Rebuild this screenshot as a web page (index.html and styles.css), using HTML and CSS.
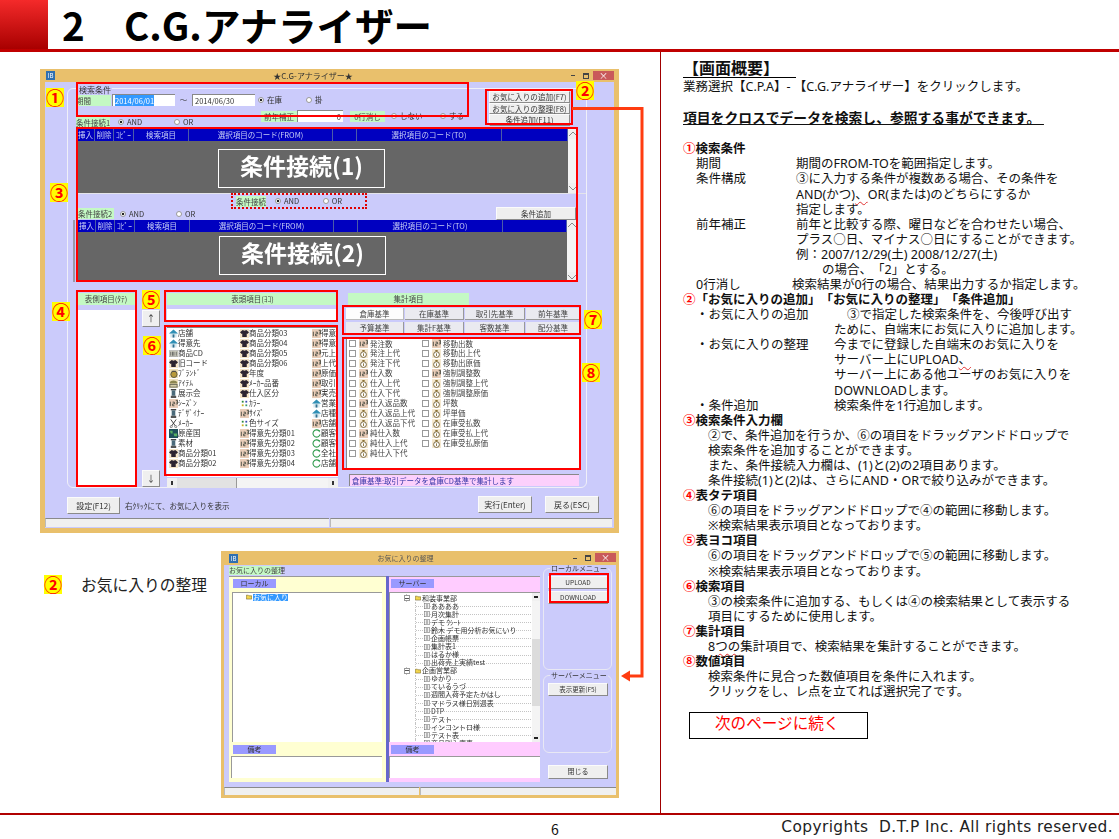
FILE: index.html
```html
<!DOCTYPE html>
<html lang="ja">

<head>
    <meta charset="UTF-8">
    <title>C.G.アナライザー</title>
    <link rel="stylesheet" href="styles.css">
</head>

<body>
    <svg class="defs" width="0" height="0">
        <symbol id="i-house" viewBox="0 0 10 10"><path d="M0 5 5 .5 10 5 8.5 5V9.5H1.5V5Z" fill="#d8e8ee"/><path d="M0 5 5 .5 10 5Z" fill="#2f8fb5"/><rect x="4" y="6" width="2" height="3.5" fill="#2f6f8f"/></symbol>
        <symbol id="i-shirt" viewBox="0 0 10 10"><rect width="10" height="10" fill="#f6e6c8"/><path d="M3 1 5 2 7 1 10 3.5 8.2 5.5 7.5 5V9H2.5V5L1.8 5.5 0 3.5Z" fill="#2c2430"/></symbol>
        <symbol id="i-123" viewBox="0 0 10 10"><rect width="10" height="10" fill="#e9cdb8"/><path d="M1.5 3V8M4 3.5H6V5.5H4V7.5H6M7.5 1.5H9.5V3.5H8M9.5 3.5V5.5H7.5" fill="none" stroke="#3a4038" stroke-width=".9"/></symbol>
        <symbol id="i-bag" viewBox="0 0 10 10"><rect width="10" height="10" fill="#f5e8cf"/><circle cx="5" cy="6.2" r="3.2" fill="#fff" stroke="#6b5a32"/><path d="M3.5 1H6.5L5.8 3H4.2Z" fill="#8a7236"/><path d="M5 4.8V7.8" stroke="#8a7236"/></symbol>
        <symbol id="i-lantern" viewBox="0 0 10 10"><rect x="2" y="0" width="6" height="1.5" fill="#444"/><rect x="3" y="1.5" width="4" height="6" fill="#4a6a7a"/><rect x="2" y="7.5" width="6" height="2.5" fill="#555"/></symbol>
        <symbol id="i-bar" viewBox="0 0 10 10"><rect y="2" width="10" height="6.5" fill="#d8d8c8" stroke="#888" stroke-width=".6"/><path d="M2 3V7.5M4 3V7.5M5.5 3V7.5M8 3V7.5" stroke="#555"/></symbol>
        <symbol id="i-brand" viewBox="0 0 10 10"><rect width="10" height="10" fill="#f3e4b8"/><circle cx="5.5" cy="6" r="3.5" fill="#b89a3a" stroke="#554"/><path d="M3 2.5H8" stroke="#444"/></symbol>
        <symbol id="i-hat" viewBox="0 0 10 10"><rect width="10" height="10" fill="#f0e2c0"/><path d="M1 4C1 1 9 1 9 4V5H1Z" fill="#8c8650"/><rect x="1" y="6" width="8" height="3" fill="#d8cfa8" stroke="#665"/></symbol>
        <symbol id="i-dots" viewBox="0 0 10 10"><rect x="2" y="2" width="2" height="2" fill="#2c8a3a"/><rect x="6" y="2" width="2" height="2" fill="#3a4ab0"/><rect x="2" y="6" width="2" height="2" fill="#c8b020"/><rect x="6" y="6" width="2" height="2" fill="#3a9a70"/></symbol>
        <symbol id="i-cut" viewBox="0 0 10 10"><path d="M2 .5 8 9M8 .5 2 9" fill="none" stroke="#333"/><circle cx="2.5" cy="8.5" r="1.2" fill="#fff" stroke="#333" stroke-width=".6"/><circle cx="7.5" cy="8.5" r="1.2" fill="#fff" stroke="#333" stroke-width=".6"/></symbol>
        <symbol id="i-globe" viewBox="0 0 10 10"><rect width="10" height="10" fill="#20505a"/><path d="M1 2H4V5H2ZM5 5H9V8H6Z" fill="#58b060"/></symbol>
        <symbol id="i-ring" viewBox="0 0 10 10"><path d="M8 2.2A4 4 0 1 0 9 6" fill="none" stroke="#2e9a4c" stroke-width="1.2"/><path d="M6.8 .8 9.2 1.6 8 3.8Z" fill="#2e9a4c"/></symbol>
        <symbol id="i-doc" viewBox="0 0 10 10"><rect x="1" y=".5" width="8" height="9" fill="#fff" stroke="#777"/><path d="M3 3H7M3 5H7M3 7H7" stroke="#555"/></symbol>
        <symbol id="i-folder" viewBox="0 0 10 10"><path d="M.5 2H4L5 3H9.5V8.5H.5Z" fill="#f2d54e" stroke="#5a4a10" stroke-width=".8"/></symbol>
    </svg>

    <div class="slide">
        <!-- 見出し -->
        <header class="head">
            <div class="head-mark"></div>
            <h1 class="head-title"><span class="head-no">2</span>C.G.アナライザー</h1>
        </header>

        <main class="page">
            <!-- 左: 画面キャプチャ -->
            <section class="shots">
                <div class="shot">
                    <div class="win win-main">
                        <div class="win-bar">
                            <span class="win-ico">IB</span>
                            <span class="win-title">★C.G-アナライザー★</span>
                            <span class="win-ctl">
                                <span class="ctl-min"></span><span class="ctl-max"></span><span class="ctl-close">×</span>
                            </span>
                        </div>
                        <div class="win-body">
                            <div class="group">
                                <span class="legend">検索条件</span>

                                <div class="search-top">
                                    <div class="period">
                                        <div class="f-row">
                                            <span class="tag tag-period">期間</span>
                                            <span class="date date-first"><span class="sel">2014/06/01</span></span>
                                            <span class="tilde">～</span>
                                            <span class="date">2014/06/30</span>
                                            <span class="opt opt-stock"><i class="radio on"></i>在庫</span>
                                            <span class="opt"><i class="radio"></i>掛</span>
                                        </div>
                                        <div class="f-row row-hosei">
                                            <span class="tag tag-hosei">前年補正</span>
                                            <span class="num-in">0</span>
                                            <span class="tag tag-zero">0行消し</span>
                                            <span class="opt opt-shinai"><i class="radio"></i>しない</span>
                                            <span class="opt"><i class="radio on"></i>する</span>
                                        </div>
                                        <div class="f-row row-c1">
                                            <span class="tag tag-c1">条件接続1</span>
                                            <span class="opt opt-and"><i class="radio on"></i>AND</span>
                                            <span class="opt"><i class="radio"></i>OR</span>
                                        </div>
                                    </div>
                                    <div class="fav-btns">
                                        <span class="btn">お気に入りの追加(F7)</span>
                                        <span class="btn">お気に入りの整理(F8)</span>
                                        <span class="btn">条件追加(F11)</span>
                                    </div>
                                </div>

                                <div class="cond cond-a">
                                    <div class="cond-main">
                                        <div class="cond-head">
                                            <span>挿入</span><span>削除</span><span>ｺﾋﾟｰ</span><span>検索項目</span><span>選択項目のコード(FROM)</span><span></span><span>選択項目のコード(TO)</span><span></span>
                                        </div>
                                        <div class="cond-dark"><div class="cond-label">条件接続(1)</div></div>
                                    </div>
                                    <div class="vscroll"><i class="up"></i><i class="down"></i></div>
                                </div>

                                <div class="cond-mid">
                                    <div class="dotted">
                                        <span class="tag tag-dot">条件接続</span>
                                        <span class="opt opt-dot"><i class="radio on"></i>AND</span>
                                        <span class="opt"><i class="radio"></i>OR</span>
                                    </div>
                                    <div class="f-row row-c2">
                                        <span class="tag tag-c2">条件接続2</span>
                                        <span class="opt opt-and2"><i class="radio on"></i>AND</span>
                                        <span class="opt"><i class="radio"></i>OR</span>
                                        <span class="btn btn-add">条件追加</span>
                                    </div>
                                </div>

                                <div class="cond cond-b">
                                    <div class="cond-main">
                                        <div class="cond-head">
                                            <span>挿入</span><span>削除</span><span>ｺﾋﾟｰ</span><span>検索項目</span><span>選択項目のコード(FROM)</span><span></span><span>選択項目のコード(TO)</span><span></span>
                                        </div>
                                        <div class="cond-dark"><div class="cond-label">条件接続(2)</div></div>
                                    </div>
                                    <div class="vscroll"><i class="up"></i><i class="down"></i></div>
                                </div>

                                <div class="lower">
                                    <div class="col-tate">
                                        <div class="tag tag-head">表側項目(ﾀﾃ)</div>
                                        <div class="white tate-list"></div>
                                    </div>
                                    <div class="col-arrows">
                                        <span class="btn btn-arrow">↑</span>
                                        <span class="btn btn-arrow">↓</span>
                                    </div>
                                    <div class="col-yoko">
                                        <div class="tag tag-head">表頭項目(ﾖｺ)</div>
                                        <div class="white yoko-in"></div>
                                        <ul class="white items">
                                            <li><svg class="ico"><use href="#i-house"/></svg>店舗</li>
                                            <li><svg class="ico"><use href="#i-house"/></svg>得意先</li>
                                            <li><svg class="ico"><use href="#i-bar"/></svg>商品CD</li>
                                            <li><svg class="ico"><use href="#i-shirt"/></svg>旧コード</li>
                                            <li><svg class="ico"><use href="#i-brand"/></svg>ﾌﾞﾗﾝﾄﾞ</li>
                                            <li><svg class="ico"><use href="#i-hat"/></svg>ｱｲﾃﾑ</li>
                                            <li><svg class="ico"><use href="#i-lantern"/></svg>展示会</li>
                                            <li><svg class="ico"><use href="#i-123"/></svg>ｼｰｽﾞﾝ</li>
                                            <li><svg class="ico"><use href="#i-lantern"/></svg>ﾃﾞｻﾞｲﾅｰ</li>
                                            <li><svg class="ico"><use href="#i-cut"/></svg>ﾒｰｶｰ</li>
                                            <li><svg class="ico"><use href="#i-globe"/></svg>原産国</li>
                                            <li><svg class="ico"><use href="#i-lantern"/></svg>素材</li>
                                            <li><svg class="ico"><use href="#i-shirt"/></svg>商品分類01</li>
                                            <li><svg class="ico"><use href="#i-shirt"/></svg>商品分類02</li>

                                            <li><svg class="ico"><use href="#i-shirt"/></svg>商品分類03</li>
                                            <li><svg class="ico"><use href="#i-shirt"/></svg>商品分類04</li>
                                            <li><svg class="ico"><use href="#i-shirt"/></svg>商品分類05</li>
                                            <li><svg class="ico"><use href="#i-shirt"/></svg>商品分類06</li>
                                            <li><svg class="ico"><use href="#i-shirt"/></svg>年度</li>
                                            <li><svg class="ico"><use href="#i-shirt"/></svg>ﾒｰｶｰ品番</li>
                                            <li><svg class="ico"><use href="#i-shirt"/></svg>仕入区分</li>
                                            <li><svg class="ico"><use href="#i-dots"/></svg>ｶﾗｰ</li>
                                            <li><svg class="ico"><use href="#i-123"/></svg>ｻｲｽﾞ</li>
                                            <li><svg class="ico"><use href="#i-dots"/></svg>色サイズ</li>
                                            <li><svg class="ico"><use href="#i-123"/></svg>得意先分類01</li>
                                            <li><svg class="ico"><use href="#i-123"/></svg>得意先分類02</li>
                                            <li><svg class="ico"><use href="#i-123"/></svg>得意先分類03</li>
                                            <li><svg class="ico"><use href="#i-123"/></svg>得意先分類04</li>

                                            <li><svg class="ico"><use href="#i-123"/></svg>得意</li>
                                            <li><svg class="ico"><use href="#i-123"/></svg>得意</li>
                                            <li><svg class="ico"><use href="#i-123"/></svg>元上</li>
                                            <li><svg class="ico"><use href="#i-123"/></svg>上代</li>
                                            <li><svg class="ico"><use href="#i-123"/></svg>原価</li>
                                            <li><svg class="ico"><use href="#i-123"/></svg>取引</li>
                                            <li><svg class="ico"><use href="#i-123"/></svg>実売</li>
                                            <li><svg class="ico"><use href="#i-house"/></svg>営業</li>
                                            <li><svg class="ico"><use href="#i-house"/></svg>店種</li>
                                            <li><svg class="ico"><use href="#i-123"/></svg>店舗</li>
                                            <li><svg class="ico"><use href="#i-ring"/></svg>顧客</li>
                                            <li><svg class="ico"><use href="#i-ring"/></svg>顧客</li>
                                            <li><svg class="ico"><use href="#i-ring"/></svg>全社</li>
                                            <li><svg class="ico"><use href="#i-ring"/></svg>店舗</li>
                                        </ul>
                                        <div class="hscroll"><i class="left"></i><i class="thumb"></i><i class="right"></i></div>
                                    </div>
                                    <div class="col-shukei">
                                        <div class="tag tag-head tag-shukei">集計項目</div>
                                        <div class="tabs">
                                            <span class="tab tab-on">倉庫基準</span>
                                            <span class="tab">在庫基準</span>
                                            <span class="tab">取引先基準</span>
                                            <span class="tab">前年基準</span>
                                            <span class="tab">予算基準</span>
                                            <span class="tab">集計F基準</span>
                                            <span class="tab">客数基準</span>
                                            <span class="tab">配分基準</span>
                                        </div>
                                        <ul class="white checks">
                                            <li><i class="box"></i><svg class="ico"><use href="#i-123"/></svg>発注数</li>
                                            <li><i class="box"></i><svg class="ico"><use href="#i-bag"/></svg>発注上代</li>
                                            <li><i class="box"></i><svg class="ico"><use href="#i-bag"/></svg>発注下代</li>
                                            <li><i class="box"></i><svg class="ico"><use href="#i-123"/></svg>仕入数</li>
                                            <li><i class="box"></i><svg class="ico"><use href="#i-bag"/></svg>仕入上代</li>
                                            <li><i class="box"></i><svg class="ico"><use href="#i-bag"/></svg>仕入下代</li>
                                            <li><i class="box"></i><svg class="ico"><use href="#i-123"/></svg>仕入返品数</li>
                                            <li><i class="box"></i><svg class="ico"><use href="#i-bag"/></svg>仕入返品上代</li>
                                            <li><i class="box"></i><svg class="ico"><use href="#i-bag"/></svg>仕入返品下代</li>
                                            <li><i class="box"></i><svg class="ico"><use href="#i-123"/></svg>純仕入数</li>
                                            <li><i class="box"></i><svg class="ico"><use href="#i-bag"/></svg>純仕入上代</li>
                                            <li><i class="box"></i><svg class="ico"><use href="#i-bag"/></svg>純仕入下代</li>

                                            <li><i class="box"></i><svg class="ico"><use href="#i-123"/></svg>移動出数</li>
                                            <li><i class="box"></i><svg class="ico"><use href="#i-bag"/></svg>移動出上代</li>
                                            <li><i class="box"></i><svg class="ico"><use href="#i-bag"/></svg>移動出原価</li>
                                            <li><i class="box"></i><svg class="ico"><use href="#i-123"/></svg>強制調整数</li>
                                            <li><i class="box"></i><svg class="ico"><use href="#i-bag"/></svg>強制調整上代</li>
                                            <li><i class="box"></i><svg class="ico"><use href="#i-bag"/></svg>強制調整原価</li>
                                            <li><i class="box"></i><svg class="ico"><use href="#i-bag"/></svg>坪数</li>
                                            <li><i class="box"></i><svg class="ico"><use href="#i-bag"/></svg>坪単価</li>
                                            <li><i class="box"></i><svg class="ico"><use href="#i-bag"/></svg>在庫受払数</li>
                                            <li><i class="box"></i><svg class="ico"><use href="#i-bag"/></svg>在庫受払上代</li>
                                            <li><i class="box"></i><svg class="ico"><use href="#i-bag"/></svg>在庫受払原価</li>
                                        </ul>
                                        <div class="info">倉庫基準:取引データを倉庫CD基準で集計します</div>
                                    </div>
                                </div>
                            </div>

                            <div class="win-foot">
                                <span class="btn btn-set">設定(F12)</span>
                                <span class="hint">右ｸﾘｯｸにて、お気に入りを表示</span>
                                <span class="btn btn-run">実行(Enter)</span>
                                <span class="btn btn-run">戻る(ESC)</span>
                            </div>
                            <div class="status"><span class="st-a"></span><span class="st-b"></span></div>
                        </div>
                    </div>

                    <!-- 注釈 -->
                    <div class="mark m1"></div>
                    <div class="mark m2"></div>
                    <div class="mark m3"></div>
                    <div class="mark m4"></div>
                    <div class="mark m5"></div>
                    <div class="mark m6"></div>
                    <div class="mark m7"></div>
                    <div class="mark m8"></div>
                    <span class="badge b1">①</span>
                    <span class="badge b2">②</span>
                    <span class="badge b3">③</span>
                    <span class="badge b4">④</span>
                    <span class="badge b5">⑤</span>
                    <span class="badge b6">⑥</span>
                    <span class="badge b7">⑦</span>
                    <span class="badge b8">⑧</span>
                </div>

                <div class="fav-row">
                    <div class="fav-cap">
                        <span class="badge">②</span>
                        <span class="fav-cap-text">お気に入りの整理</span>
                    </div>
                    <div class="shot">
                        <div class="win win-fav">
                            <div class="win-bar">
                                <span class="win-ico">IB</span>
                                <span class="win-title">お気に入りの整理</span>
                                <span class="win-ctl">
                                    <span class="ctl-min"></span><span class="ctl-max"></span><span class="ctl-close">×</span>
                                </span>
                            </div>
                            <div class="fav-body">
                                <div class="fav-left">
                                    <span class="tag fav-tag">お気に入りの整理</span>
                                    <div class="panes">
                                        <div class="pane pane-local">
                                            <div class="pane-head">ローカル</div>
                                            <div class="tree">
                                                <div class="node node-root">
                                                    <svg class="ico-s"><use href="#i-folder"/></svg><span class="sel">お気に入り</span>
                                                </div>
                                            </div>
                                            <div class="pane-head pane-note">備考</div>
                                            <div class="note"></div>
                                        </div>
                                        <div class="splitter"></div>
                                        <div class="pane pane-server">
                                            <div class="pane-head">サーバー</div>
                                            <div class="tree tree-server">
                                                <ul class="nodes">
                                                    <li class="dept"><i class="tgl"></i><svg class="ico-s"><use href="#i-folder"/></svg>和装事業部</li>
                                                    <li><svg class="ico-s"><use href="#i-doc"/></svg>ああああ</li>
                                                    <li><svg class="ico-s"><use href="#i-doc"/></svg>月次集計</li>
                                                    <li><svg class="ico-s"><use href="#i-doc"/></svg>デモ ｳｼｰﾄ</li>
                                                    <li><svg class="ico-s"><use href="#i-doc"/></svg>鈴木 デモ用分析お気にいり</li>
                                                    <li><svg class="ico-s"><use href="#i-doc"/></svg>企画帳票</li>
                                                    <li><svg class="ico-s"><use href="#i-doc"/></svg>集計表1</li>
                                                    <li><svg class="ico-s"><use href="#i-doc"/></svg>はるか様</li>
                                                    <li><svg class="ico-s"><use href="#i-doc"/></svg>出荷売上実績test</li>
                                                    <li class="dept"><i class="tgl"></i><svg class="ico-s"><use href="#i-folder"/></svg>企画営業部</li>
                                                    <li><svg class="ico-s"><use href="#i-doc"/></svg>ゆかり</li>
                                                    <li><svg class="ico-s"><use href="#i-doc"/></svg>ているうづ</li>
                                                    <li><svg class="ico-s"><use href="#i-doc"/></svg>週間入荷予定たかはし</li>
                                                    <li><svg class="ico-s"><use href="#i-doc"/></svg>マドラス様日別週表</li>
                                                    <li><svg class="ico-s"><use href="#i-doc"/></svg>DTP</li>
                                                    <li><svg class="ico-s"><use href="#i-doc"/></svg>テスト</li>
                                                    <li><svg class="ico-s"><use href="#i-doc"/></svg>インコントロ様</li>
                                                    <li><svg class="ico-s"><use href="#i-doc"/></svg>テスト表</li>
                                                    <li><svg class="ico-s"><use href="#i-doc"/></svg>商品別入庫表</li>
                                                </ul>
                                                <div class="vscroll vscroll-s"><i class="up"></i><i class="thumb-v"></i><i class="down"></i></div>
                                            </div>
                                            <div class="pane-head pane-note">備考</div>
                                            <div class="note"></div>
                                        </div>
                                    </div>
                                </div>
                                <div class="fav-menu">
                                    <div class="menu-group menu-local">
                                        <span class="menu-legend">ローカルメニュー</span>
                                        <span class="btn btn-menu">UPLOAD</span>
                                        <span class="btn btn-menu">DOWNLOAD</span>
                                    </div>
                                    <div class="menu-group menu-server">
                                        <span class="menu-legend">サーバーメニュー</span>
                                        <span class="btn btn-menu">表示更新(F5)</span>
                                    </div>
                                    <span class="btn btn-menu btn-close">閉じる</span>
                                </div>
                            </div>
                            <div class="status status-fav"><span class="st-a"></span><span class="st-b"></span></div>
                        </div>
                        <div class="mark m-up"></div>
                    </div>
                </div>

                <!-- ②の矢印 -->
                <svg class="arrow" width="80" height="580" viewBox="0 0 80 580">
                    <path d="M0 1.5H70V569H55" fill="none" stroke="#ff3c10" stroke-width="3"/>
                    <path d="M49 569 58 563.5V574.5Z" fill="#ff3c10"/>
                </svg>
            </section>

            <!-- 右: 説明文 -->
            <section class="desc">
                <h2 class="desc-title">【画面概要】</h2>
                <p class="ln">業務選択【C.P.A】- 【C.G.アナライザー】をクリックします。</p>
                <p class="ln ln-gap">&nbsp;</p>
                <p class="ln lead"><u>項目をクロスでデータを検索し、参照する事ができます。&nbsp;</u></p>
                <p class="ln ln-gap">&nbsp;</p>

                <p class="ln sec"><span class="no">①</span>検索条件</p>
                <p class="ln in1"><span class="term">期間</span>期間のFROM-TOを範囲指定します。</p>
                <p class="ln in1"><span class="term">条件構成</span>③に入力する条件が複数ある場合、その条件を</p>
                <p class="ln in-d">AND(かつ)<span class="sq">、</span>OR(または)のどちらにするか</p>
                <p class="ln in-d">指定します。</p>
                <p class="ln in1"><span class="term">前年補正</span>前年と比較する際、曜日などを合わせたい場合、</p>
                <p class="ln in-d">プラス○日、マイナス○日にすることができます。</p>
                <p class="ln in-d">例：2007/12/29(土) 2008/12/27(土)</p>
                <p class="ln in-e">の場合、「2」とする。</p>
                <p class="ln in1"><span class="term term-zero">0行消し</span>検索結果が0行の場合、結果出力するか指定します。</p>

                <p class="ln sec"><span class="no">②</span>「お気に入りの追加」「お気に入りの整理」「条件追加」</p>
                <p class="ln in1"><span class="bul">・お気に入りの追加</span><span class="bul-first">③で指定した検索条件を、今後呼び出す</span></p>
                <p class="ln in-b">ために、自端末にお気に入りに追加します。</p>
                <p class="ln in1"><span class="bul">・お気に入りの整理</span>今までに登録した自端末のお気に入りを</p>
                <p class="ln in-b">サーバー上にUPLOAD<span class="sq">、</span></p>
                <p class="ln in-b">サーバー上にある他ユーザのお気に入りを</p>
                <p class="ln in-b">DOWNLOADします。</p>
                <p class="ln in1"><span class="bul">・条件追加</span>検索条件を1行追加します。</p>

                <p class="ln sec"><span class="no">③</span>検索条件入力欄</p>
                <p class="ln in2">②で、条件追加を行うか、⑥の項目をドラッグアンドドロップで</p>
                <p class="ln in2">検索条件を追加することができます。</p>
                <p class="ln in2">また、条件接続入力欄は、(1)と(2)の2項目あります。</p>
                <p class="ln in2">条件接続(1)と(2)は、さらにAND・ORで絞り込みができます。</p>

                <p class="ln sec"><span class="no">④</span>表タテ項目</p>
                <p class="ln in2">⑥の項目をドラッグアンドドロップで④の範囲に移動します。</p>
                <p class="ln in2">※検索結果表示項目となっております。</p>

                <p class="ln sec"><span class="no">⑤</span>表ヨコ項目</p>
                <p class="ln in2">⑥の項目をドラッグアンドドロップで⑤の範囲に移動します。</p>
                <p class="ln in2">※検索結果表示項目となっております。</p>

                <p class="ln sec"><span class="no">⑥</span>検索項目</p>
                <p class="ln in2">③の検索条件に追加する、もしくは④の検索結果として表示する</p>
                <p class="ln in2">項目にするために使用します。</p>

                <p class="ln sec"><span class="no">⑦</span>集計項目</p>
                <p class="ln in2">8<span class="sq">つの</span>集計項目で、検索結果を集計することができます。</p>

                <p class="ln sec"><span class="no">⑧</span>数値項目</p>
                <p class="ln in2">検索条件に見合った数値項目を条件に入れます。</p>
                <p class="ln in2">クリックをし、レ点を立てれば選択完了です。</p>

                <div class="next">次のページに続く</div>
            </section>
        </main>

        <footer class="foot">
            <span class="foot-no">6</span>
            <span class="foot-copy">Copyrights&nbsp; D.T.P Inc. All rights reserved.</span>
        </footer>
    </div>
</body>

</html>
```

FILE: styles.css
```css
* {
    padding: 0;
    margin: 0;
    box-sizing: border-box;
    list-style: none;
}

html,
body {
    background: #fff;
}

body {
    width: 1119px;
    height: 839px;
    overflow: hidden;
    font-family: "Noto Sans CJK JP", "Noto Sans", sans-serif;
    color: #111;
    text-spacing-trim: space-all;
}

.defs {
    position: absolute;
}

.slide {
    width: 1119px;
    height: 839px;
    display: grid;
    grid-template-rows: 52px 761px 26px;
}

/* 見出し */
.head {
    display: flex;
    border-bottom: 3px solid #c00000;
}

.head-mark {
    width: 48px;
    background: linear-gradient(#f42a2a 0%, #a80000 100%);
}

.head-title {
    margin-left: 14px;
    font-size: 38.5px;
    line-height: 48px;
    font-weight: 700;
    color: #000;
    white-space: nowrap;
}

.head-no {
    display: inline-block;
    width: 62px;
}

.page {
    display: grid;
    grid-template-columns: 661px 1fr;
    position: relative;
}

/* 左カラム */
.shots {
    position: relative;
    padding: 17px 0 0 40px;
    border-right: 1px solid #a00000;
}

.shot {
    position: relative;
}

.win {
    background: #e9c06c;
    font-size: 7.5px;
    line-height: 1;
    color: #333;
    white-space: nowrap;
    filter: blur(.3px);
}

.win-main {
    width: 579px;
    height: 464px;
    padding: 0 5px 5px;
}

.win-bar {
    display: flex;
    align-items: center;
    height: 13px;
    position: relative;
}

.win-ico {
    width: 9px;
    height: 9px;
    margin-left: 1px;
    background: #2f6fb0;
    color: #fff;
    font-size: 6px;
    line-height: 9px;
    text-align: center;
}

.win-title {
    flex: 1;
    text-align: center;
    font-size: 8px;
    color: #333;
}

.win-ctl {
    display: flex;
    align-items: center;
    height: 10px;
}

.ctl-min {
    width: 4px;
    height: 1px;
    margin-right: 8px;
    background: #444;
}

.ctl-max {
    width: 6px;
    height: 6px;
    margin-right: 4px;
    border: 1px solid #444;
    border-top-width: 2px;
}

.ctl-close {
    width: 21px;
    height: 9px;
    margin-top: -1px;
    background: #c9595a;
    color: #fff;
    font-size: 9px;
    line-height: 9px;
    text-align: center;
}

.win-body {
    height: 446px;
    padding-top: 6px;
    background: #cbcbfb;
}

.group {
    position: relative;
    width: 520px;
    height: 400px;
    margin-left: 22px;
    padding: 5px 0 0 8px;
    border: 1px solid #f0f0f8;
    border-radius: 6px;
}

.legend {
    position: absolute;
    left: 10px;
    top: -3px;
    padding: 0 1px;
    background: #cbcbfb;
    font-size: 8px;
}

.search-top {
    display: flex;
    height: 35px;
}

.period {
    width: 413px;
}

.f-row {
    display: flex;
    align-items: center;
    height: 12px;
}

.tag {
    display: block;
    height: 11px;
    background: #c4f9c4;
    font-size: 7.5px;
    line-height: 11px;
    color: #444;
    text-align: center;
}

.tag-period {
    width: 35px;
    padding-right: 20px;
}

.date {
    width: 63px;
    height: 12px;
    padding-left: 2px;
    background: #fff;
    border-top: 1px solid #888;
    border-left: 1px solid #888;
    line-height: 11px;
}

.date-first {
    margin-left: 1px;
}

.sel {
    background: #3399ff;
    color: #fff;
}

.tilde {
    width: 17px;
    text-align: center;
}

.opt {
    display: flex;
    align-items: center;
    width: 48px;
}

.opt-stock {
    margin-left: 3px;
}

.radio {
    width: 6px;
    height: 6px;
    margin-right: 3px;
    border: 1px solid #999;
    border-radius: 50%;
    background: #fff;
}

.radio.on {
    background: radial-gradient(circle, #222 0 1.3px, #fff 1.6px);
}

.row-hosei {
    margin-top: 4px;
    padding-left: 185px;
}

.tag-hosei {
    width: 36px;
}

.num-in {
    width: 46px;
    height: 12px;
    padding-right: 2px;
    background: #fff;
    border-top: 1px solid #888;
    border-left: 1px solid #888;
    text-align: right;
    line-height: 11px;
}

.tag-zero {
    width: 35px;
    margin-left: 7px;
}

.opt-shinai {
    width: 49px;
    margin-left: 6px;
}

.row-c1 {
    margin-top: -6px;
}

.tag-c1 {
    width: 34px;
}

.opt-and {
    width: 56px;
    margin-left: 8px;
}

.fav-btns {
    width: 81px;
    height: 35px;
    margin-top: -3px;
    display: flex;
    flex-direction: column;
}

.btn {
    display: block;
    background: #efefef;
    border-top: 1px solid #fbfbfb;
    border-left: 1px solid #fbfbfb;
    border-right: 1px solid #8a8a8a;
    border-bottom: 1px solid #8a8a8a;
    text-align: center;
    color: #333;
}

.fav-btns .btn {
    height: 11.6px;
    line-height: 10px;
    font-size: 7.6px;
}

/* 条件入力欄 */
.cond {
    display: flex;
    width: 501px;
    margin-left: 1px;
}

.cond-b {
    width: 504px;
    margin-left: -3px;
    padding-left: 3px;
    border-left: 2px solid #9a9aa8;
}

.cond-main {
    flex: 1;
}

.cond-head {
    display: grid;
    grid-template-columns: 18px 19px 20px 55px 144px 24px 145px 1fr;
    height: 12px;
    background: #0000c0;
}

.cond-head span {
    border-right: 1px solid #4a5ca8;
    color: #c6cdf5;
    text-align: center;
    line-height: 12px;
}

.cond-dark {
    height: 52px;
    padding: 8px 0 0 141px;
    background: #666;
}

.cond-b .cond-dark {
    height: 50px;
    padding-top: 4px;
}

.cond-label {
    width: 167px;
    height: 39px;
    border: 1px solid #fff;
    color: #fff;
    font-size: 23px;
    font-weight: 700;
    line-height: 31px;
    text-align: center;
}

.vscroll {
    display: flex;
    flex-direction: column;
    justify-content: space-between;
    width: 10px;
    background: #f4f4f4;
}

.vscroll i {
    display: block;
    height: 10px;
    background: #f0f0f0;
}

.vscroll .up {
    background: linear-gradient(135deg, transparent 46%, #888 47% 53%, transparent 54%) 1px 3px / 4px 4px no-repeat,
        linear-gradient(225deg, transparent 46%, #888 47% 53%, transparent 54%) 5px 3px / 4px 4px no-repeat,
        #f0f0f0;
}

.vscroll .down {
    background: linear-gradient(45deg, transparent 46%, #888 47% 53%, transparent 54%) 1px 3px / 4px 4px no-repeat,
        linear-gradient(315deg, transparent 46%, #888 47% 53%, transparent 54%) 5px 3px / 4px 4px no-repeat,
        #f0f0f0;
}

.cond-mid {
    height: 27px;
    border-top: 1px solid #e4e4ea;
}

.dotted {
    display: flex;
    align-items: center;
    width: 136px;
    height: 16px;
    margin: -1px 0 -2px 155px;
    padding-left: 3px;
    border: 2px dotted #e00000;
}

.tag-dot {
    width: 32px;
}

.opt-dot {
    width: 54px;
    margin-left: 9px;
}

.row-c2 {
    width: 500px;
    height: 13px;
}

.tag-c2 {
    width: 38px;
}

.opt-and2 {
    width: 56px;
    margin-left: 6px;
}

.btn-add {
    width: 80px;
    height: 13px;
    margin-left: auto;
    line-height: 11px;
}

/* 下段 */
.lower {
    display: flex;
    height: 194px;
    margin: 11px 0 0 1px;
}

.col-tate {
    width: 58px;
    display: flex;
    flex-direction: column;
}

.tag-head {
    height: 12px;
    line-height: 12px;
}

.white {
    background: #fff;
}

.tate-list {
    flex: 1;
    margin-top: 5px;
}

.col-arrows {
    width: 18px;
    margin: 17px 0 0 7px;
    display: flex;
    flex-direction: column;
    justify-content: space-between;
}

.btn-arrow {
    height: 17px;
    line-height: 15px;
    font-size: 9px;
}

.col-yoko {
    width: 171px;
    margin-left: 7px;
}

.yoko-in {
    height: 13px;
    margin-top: 4px;
}

.items {
    display: grid;
    grid-auto-flow: column;
    grid-template-rows: repeat(14, 10px);
    grid-template-columns: 71px 72px 28px;
    height: 150px;
    margin-top: 5px;
    padding: 0 0 0 2px;
    border-top: 1px solid #888;
    overflow: hidden;
    color: #333;
}

.items li,
.checks li {
    display: flex;
    align-items: center;
    font-size: 7.5px;
    overflow: hidden;
}

.ico {
    width: 9px;
    height: 9px;
    margin-right: 0;
    flex: none;
}

.hscroll {
    display: flex;
    height: 10px;
    margin-top: 1px;
    background: #f4f4f4;
}

.hscroll i {
    display: block;
    width: 10px;
    background: #f0f0f0;
}

.hscroll .left {
    background: linear-gradient(#333, #333) 4px 3px / 2px 4px no-repeat, #f0f0f0;
}

.hscroll .right {
    margin-left: auto;
    background: linear-gradient(#333, #333) 4px 3px / 2px 4px no-repeat, #f0f0f0;
}

.hscroll .thumb {
    width: 60px;
    background: #e2e2e2;
    border-right: 1px solid #999;
}

.col-shukei {
    width: 235px;
    margin-left: 8px;
}

.tag-shukei {
    width: 121px;
    margin-left: 2px;
}

.tabs {
    display: grid;
    grid-template-columns: 58px 59px 60px 55px;
    grid-auto-rows: 12px;
    gap: 2px 1px;
    margin-top: 3px;
}

.tab {
    background: #eaeaf0;
    border-right: 1px solid #999;
    border-bottom: 1px solid #999;
    color: #444;
    text-align: center;
    line-height: 11px;
}

.tab-on {
    background: #fdfdfd;
    border-color: #bbb;
}

.checks {
    display: grid;
    grid-auto-flow: column;
    grid-template-rows: 9px repeat(11, 10px);
    grid-template-columns: 73px 120px;
    height: 131px;
    margin-top: 4px;
    padding: 0 0 0 2px;
    border-left: 1px solid #888;
    border-top: 1px solid #888;
    color: #444;
}

.box {
    width: 7px;
    height: 7px;
    margin-right: 3px;
    flex: none;
    border: 1px solid #999;
    background: #fff;
}

.checks .ico {
    margin-right: 2px;
}

.info {
    height: 12px;
    margin: 5px 2px 0 3px;
    padding-left: 2px;
    background: #fcd0fc;
    border-top: 1px solid #888;
    border-left: 1px solid #888;
    color: #3535a5;
    line-height: 11px;
}

.win-foot {
    display: flex;
    align-items: center;
    height: 19px;
    margin-top: 7px;
    padding-left: 22px;
    padding-right: 15px;
}

.btn-set {
    width: 53px;
    height: 17px;
    margin-top: 1px;
    line-height: 15px;
    font-size: 8px;
}

.hint {
    margin: 2px auto 0 5px;
}

.btn-run {
    width: 54px;
    height: 17px;
    margin-left: 13px;
    line-height: 15px;
    font-size: 8px;
}

.status {
    display: flex;
    gap: 1px;
    height: 9px;
    margin-top: 4px;
    padding-right: 2px;
}

.status span {
    background: #f0f0f0;
    border-top: 1px solid #8a8a8a;
    border-left: 1px solid #bbb;
}

.st-a {
    width: 284px;
}

.st-b {
    flex: 1;
}

/* 赤枠と番号 */
.mark {
    position: absolute;
    border: 2px solid #f00;
}

.m1 { left: 36px; top: 13px; width: 393px; height: 35px; }
.m2 { left: 445px; top: 20px; width: 88px; height: 36px; }
.m3 { left: 36px; top: 58px; width: 502px; height: 155px; }
.m4 { left: 36px; top: 221px; width: 61px; height: 197px; }
.m5 { left: 124px; top: 221px; width: 174px; height: 32px; }
.m6 { left: 124px; top: 256px; width: 174px; height: 151px; }
.m7 { left: 302px; top: 236px; width: 239px; height: 30px; }
.m8 { left: 302px; top: 268px; width: 239px; height: 133px; }
.m-up { left: 328px; top: 22px; width: 60px; height: 30px; }

.badge {
    display: block;
    width: 18px;
    height: 19px;
    background: #ff0;
    color: #f00;
    font-size: 18px;
    font-weight: 700;
    line-height: 19px;
    text-align: center;
}

.b1, .b2, .b3, .b4, .b5, .b6, .b7, .b8 {
    position: absolute;
}

.b1 { left: 6px; top: 19px; }
.b2 { left: 536px; top: 12px; }
.b3 { left: 10px; top: 114px; }
.b4 { left: 12px; top: 233px; }
.b5 { left: 102px; top: 221px; }
.b6 { left: 103px; top: 267px; }
.b7 { left: 544px; top: 241px; }
.b8 { left: 542px; top: 294px; }

/* お気に入りの整理 */
.fav-row {
    display: flex;
    margin-top: 18px;
}

.fav-cap {
    display: flex;
    align-items: center;
    width: 181px;
    height: 19px;
    margin-top: 24px;
    padding-left: 4px;
}

.fav-cap-text {
    margin-left: 19px;
    font-size: 15.75px;
    color: #222;
}

.win-fav {
    width: 398px;
    height: 247px;
    padding: 0 3px 3px;
    font-size: 7px;
}

.win-fav .win-bar {
    height: 14px;
}

.win-fav .win-ico {
    margin-left: 5px;
}

.win-fav .win-title {
    font-size: 7px;
    color: #555;
}

.fav-body {
    display: flex;
    height: 222px;
    background: #cbcbfb;
}

.fav-left {
    width: 316px;
    padding: 1px 0 0 5px;
}

.fav-tag {
    width: 52px;
    height: 9px;
    line-height: 9px;
    font-size: 7px;
}

.panes {
    display: flex;
    height: 206px;
    margin-top: 1px;
}

.pane {
    border-top: 1px solid #999;
    padding: 2px 0 0 3px;
}

.pane-local {
    width: 157px;
    background: #ffffd2;
}

.pane-server {
    width: 151px;
    padding-left: 0;
    background: #ffccff;
}

.splitter {
    width: 3px;
    background: #6666cc;
}

.pane-head {
    width: 43px;
    height: 9px;
    margin-left: 1px;
    background: #9999ff;
    color: #333;
    line-height: 9px;
    text-align: center;
}

.pane-server .pane-head {
    margin-left: 2px;
}

.tree {
    display: flex;
    height: 150px;
    margin-top: 4px;
    margin-right: 4px;
    background: #fff;
    border-top: 1px solid #999;
    border-left: 1px solid #999;
    overflow: hidden;
}

.tree-server {
    margin-right: 0;
}

.node-root {
    display: flex;
    align-items: center;
    height: 8px;
    padding-left: 13px;
}

.ico-s {
    width: 6px;
    height: 6px;
    margin-right: 1px;
    flex: none;
}

.nodes {
    flex: 1;
    overflow: hidden;
    padding-top: 1px;
}

.nodes li {
    display: flex;
    align-items: center;
    height: 8.08px;
    margin-left: 25px;
    padding-left: 8px;
    background: linear-gradient(90deg, #c4c4c4 50%, transparent 50%) 0 4px / 2px 1px repeat-x;
    border-left: 1px dotted #c4c4c4;
}

.nodes .dept {
    position: relative;
    margin-left: 16px;
    padding-left: 8px;
    background: none;
}

.tgl {
    position: absolute;
    left: -3px;
    top: 1px;
    width: 6px;
    height: 6px;
    border: 1px solid #999;
    background: linear-gradient(#555, #555) center / 4px 1px no-repeat, #fff;
}

.vscroll-s {
    width: 8px;
}

.vscroll-s i {
    height: 8px;
}

.vscroll-s .up,
.vscroll-s .down {
    background: linear-gradient(#222, #222) 2px 3px / 4px 2px no-repeat, #f0f0f0;
}

.vscroll-s .thumb-v {
    height: 67px;
    margin: 38px 0 auto;
    background: #dcdcdc;
}

.pane-note {
    margin-top: 3px;
}

.note {
    height: 22px;
    margin: 2px 4px 0 -1px;
    background: #fff;
    border-top: 1px solid #999;
    border-left: 1px solid #999;
}

.pane-server .note {
    margin: 2px 0 0;
}

.fav-menu {
    width: 69px;
    margin-left: 3px;
    display: flex;
    flex-direction: column;
}

.menu-group {
    position: relative;
    padding: 7px 0 0 4px;
    border: 1px solid #e8e8f4;
    border-radius: 6px;
}

.menu-local {
    height: 102px;
    margin-top: 3px;
}

.menu-server {
    height: 78px;
    margin-top: 5px;
}

.menu-legend {
    position: absolute;
    left: 6px;
    top: -4px;
    padding: 0 1px;
    background: #cbcbfb;
    font-size: 7px;
}

.btn-menu {
    width: 60px;
    height: 13px;
    margin-bottom: 2px;
    line-height: 11px;
    font-size: 6.5px;
}

.btn-close {
    margin: 12px 0 0 5px;
    height: 14px;
    font-size: 7px;
}

.status-fav {
    height: 8px;
    margin-top: 0;
    padding: 0;
}

.status-fav .st-a {
    width: 195px;
}

.arrow {
    position: absolute;
    left: 572px;
    top: 55px;
}

/* 右カラム */
.desc {
    padding: 7px 0 0 22px;
    font-family: "Noto Sans", "Noto Sans CJK JP", sans-serif;
    font-size: 12.5px;
    white-space: nowrap;
}

.desc-title {
    width: 113px;
    height: 19px;
    margin-bottom: 1px;
    border-bottom: 1px solid #000;
    font-size: 16px;
    font-weight: 700;
    line-height: 18px;
}

.ln {
    height: 15.08px;
    line-height: 15.08px;
}

.ln-gap {
    height: 16.08px;
}

.lead {
    font-size: 13.8px;
    font-weight: 700;
}

.sec {
    font-weight: 700;
}

.no {
    color: #f00;
}

.in1 { padding-left: 13px; }
.in2 { padding-left: 25px; }
.in-d { padding-left: 113px; }
.in-e { padding-left: 139px; }
.in-b { padding-left: 151px; }

.term {
    display: inline-block;
    width: 100px;
}

.term-zero {
    width: 96px;
}

.bul {
    display: inline-block;
    width: 138px;
}

.bul-first {
    margin-left: 13px;
}

.sq {
    text-decoration: underline wavy #e03030 1px;
    text-decoration-skip-ink: none;
    text-underline-offset: 2px;
}

.next {
    width: 179px;
    height: 27px;
    margin: 13px 0 0 6px;
    border: 1px solid #000;
    padding-left: 25px;
    color: #f00;
    font-size: 15.6px;
    line-height: 21px;
}

/* フッター */
.foot {
    display: flex;
    align-items: center;
    border-top: 2px solid #b00000;
}

.foot-no {
    margin-left: 551px;
    margin-top: 4px;
    font-size: 14px;
}

.foot-copy {
    margin-left: auto;
    margin-right: 6px;
    font-family: "DejaVu Sans", sans-serif;
    font-size: 15.4px;
    letter-spacing: .4px;
    color: #222;
}
```
